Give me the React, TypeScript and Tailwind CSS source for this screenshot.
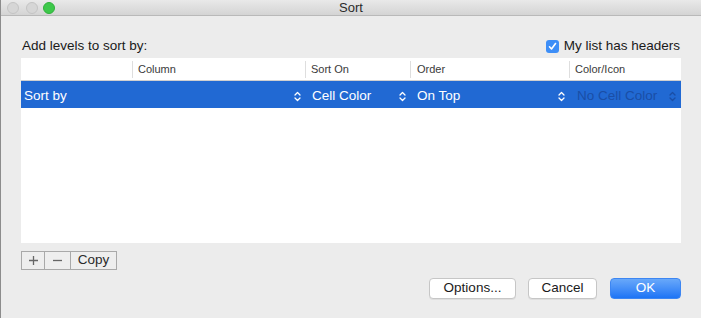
import React from "react";

function Chevron({ color }: { color: string }) {
  return (
    <svg width="7" height="11" viewBox="0 0 7 11" fill="none" stroke={color} strokeWidth="1.3" strokeLinecap="round" strokeLinejoin="round">
      <path d="M1 4 L3.5 1.5 L6 4" />
      <path d="M1 7 L3.5 9.5 L6 7" />
    </svg>
  );
}

export default function App() {
  return (
    <div
      className="w-[701px] h-[318px] bg-[#ececec] flex flex-col border-l border-[#8c8c8c] overflow-hidden text-[13px] text-[#1a1a1a]"
      style={{ fontFamily: '"Liberation Sans", Arial, sans-serif' }}
    >
      {/* Title bar */}
      <div className="relative h-[16px] shrink-0 bg-gradient-to-b from-[#e9e9e9] to-[#d4d4d4] border-b border-[#b9b9b9] flex items-center justify-center">
        <div className="absolute left-[6px] top-[2px] flex gap-[8px]">
          <div className="w-[12px] h-[12px] rounded-full bg-[#d6d6d6] border border-[#c4c4c4]" />
          <div className="w-[12px] h-[12px] rounded-full bg-[#d6d6d6] border border-[#c4c4c4] ml-[-1px]" />
          <div className="w-[12px] h-[12px] rounded-full bg-[#3dc84a] border border-[#30b03c] ml-[-3px]" />
        </div>
        <span className="text-[13px] leading-[15px] text-[#2a2a2a]">Sort</span>
      </div>

      {/* Body */}
      <div className="flex flex-col pl-[20px] pr-[20px]">
        <div className="h-[16px] mt-[22px] mb-[4px] flex items-center justify-between text-[13.5px]">
          <span className="ml-[1px]">Add levels to sort by:</span>
          <div className="flex items-center gap-[5px] mr-[1px]">
            <div className="w-[13px] h-[13px] rounded-[3px] bg-[#3d8ef7] flex items-center justify-center">
              <svg width="9" height="9" viewBox="0 0 9 9" fill="none" stroke="white" strokeWidth="1.6" strokeLinecap="round" strokeLinejoin="round">
                <path d="M1.5 4.8 L3.5 7 L7.5 1.5" />
              </svg>
            </div>
            <span>My list has headers</span>
          </div>
        </div>

        {/* Table */}
        <div className="w-[660px] h-[185px] bg-white flex flex-col">
          <div className="h-[23px] border-b border-[#d0d0d0] flex items-center text-[11px] text-[#3a3a3a]">
            <div className="w-[111px] h-[17px]" />
            <div className="w-[173px] h-[17px] border-l border-[#dedede] pl-[5px] flex items-center">Column</div>
            <div className="w-[105px] h-[17px] border-l border-[#dedede] pl-[5px] flex items-center">Sort On</div>
            <div className="w-[159px] h-[17px] border-l border-[#dedede] pl-[6px] flex items-center">Order</div>
            <div className="w-[112px] h-[17px] border-l border-[#dedede] pl-[5px] flex items-center">Color/Icon</div>
          </div>
          <div className="h-[27px] pt-[3px] bg-[#2169d3] flex items-center text-white text-[13.5px]">
            <div className="w-[284px] flex items-center justify-between pl-[3px] pr-[4px]">
              <span>Sort by</span>
              <Chevron color="#ffffff" />
            </div>
            <div className="w-[105px] flex items-center justify-between pl-[7px] pr-[4px]">
              <span>Cell Color</span>
              <Chevron color="#ffffff" />
            </div>
            <div className="w-[159px] flex items-center justify-between pl-[7px] pr-[4px]">
              <span>On Top</span>
              <Chevron color="#ffffff" />
            </div>
            <div className="w-[112px] flex items-center justify-between pl-[8px] pr-[5px] text-[#1a4ea6]">
              <span>No Cell Color</span>
              <Chevron color="#1a4ea6" />
            </div>
          </div>
        </div>

        {/* +/- Copy */}
        <div className="mt-[8px] h-[19px] flex w-[96px] border border-[#a9a9a9] bg-[#eeeeee] text-[#2a2a2a] text-[13.5px]">
          <div className="w-[23px] flex items-center justify-center border-r border-[#a9a9a9]">
            <svg width="11" height="11" viewBox="0 0 11 11" stroke="#666" strokeWidth="1.3">
              <path d="M5.5 1 V10 M1 5.5 H10" />
            </svg>
          </div>
          <div className="w-[26px] flex items-center justify-center border-r border-[#a9a9a9]">
            <svg width="11" height="11" viewBox="0 0 11 11" stroke="#666" strokeWidth="1.3">
              <path d="M1 5.5 H10" />
            </svg>
          </div>
          <div className="flex-1 flex items-center justify-center">Copy</div>
        </div>

        {/* Bottom buttons */}
        <div className="mt-[8px] flex justify-end text-[13.5px]">
          <button className="w-[87px] h-[21px] bg-white border border-[#c6c6c6] rounded-[4px] shadow-[0_1px_0_rgba(0,0,0,0.06)] text-[#1a1a1a] flex items-center justify-center">
            Options...
          </button>
          <button className="ml-[12px] w-[69px] h-[21px] bg-white border border-[#c6c6c6] rounded-[4px] shadow-[0_1px_0_rgba(0,0,0,0.06)] text-[#1a1a1a] flex items-center justify-center">
            Cancel
          </button>
          <button className="ml-[13px] w-[71px] h-[21px] bg-gradient-to-b from-[#68a8fa] to-[#1c74f5] border border-[#3d86f2] rounded-[4px] text-white flex items-center justify-center">
            OK
          </button>
        </div>
      </div>
    </div>
  );
}
